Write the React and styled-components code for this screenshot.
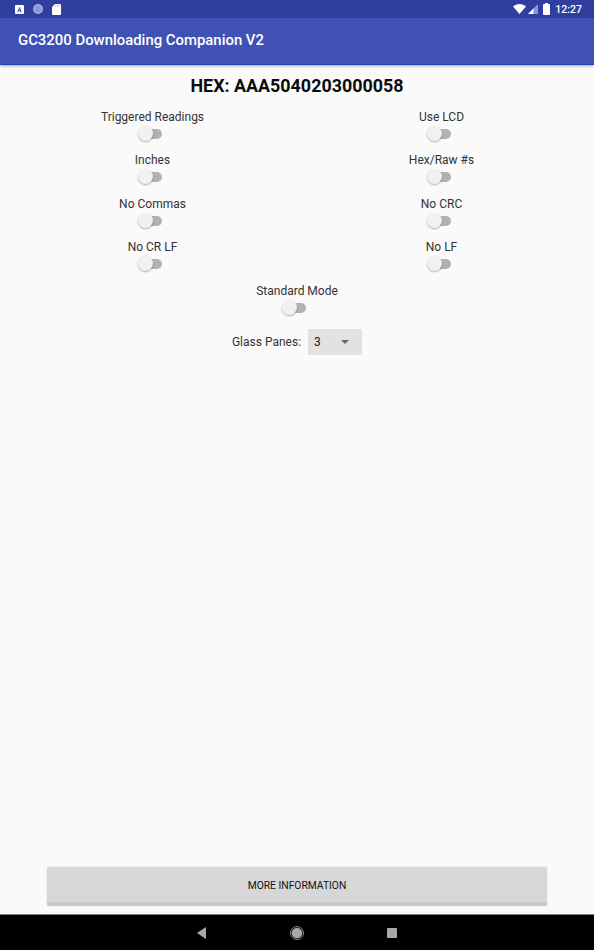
import styled, { createGlobalStyle } from 'styled-components';

const GlobalStyle = createGlobalStyle`
  html, body {
    margin: 0;
    padding: 0;
    background: #fafafa;
  }
  body {
    font-family: Roboto, "Liberation Sans", sans-serif;
  }
`;

const Screen = styled.div`
  width: 594px;
  height: 950px;
  display: flex;
  flex-direction: column;
  overflow: hidden;
  background: #fafafa;
`;

const StatusBar = styled.div`
  height: 18px;
  flex: none;
  background: #303f9f;
  display: flex;
  align-items: center;
  justify-content: space-between;
  padding: 0 12px 0 15px;
`;

const StatusGroup = styled.div`
  display: flex;
  align-items: center;
  gap: ${(p) => p.$gap}px;
`;

const Clock = styled.span`
  color: #fff;
  font-size: 10.5px;
  font-weight: 500;
  margin-left: 3px;
`;

const Toolbar = styled.header`
  height: 47px;
  flex: none;
  box-sizing: border-box;
  background: #3f51b5;
  border-bottom: 1px solid #1f3fc0;
  box-shadow: 0 1px 3px rgba(0, 0, 0, 0.35);
  display: flex;
  align-items: center;
  padding: 0 18px 2px;
  color: #fff;
  font-size: 14.9px;
  font-weight: 500;
`;

const Content = styled.main`
  flex: 1;
  display: flex;
  flex-direction: column;
  align-items: center;
`;

const Hex = styled.h1`
  margin: 11px 0 0;
  height: 20px;
  line-height: 20px;
  font-size: 17.9px;
  font-weight: 700;
  color: #0c0c0c;
  text-align: center;
`;

const OptionGrid = styled.div`
  width: 578px;
  margin-top: 13px;
  display: grid;
  grid-template-columns: 289px 289px;
  grid-auto-rows: 43.4px;
`;

const Option = styled.div`
  display: flex;
  flex-direction: column;
  align-items: center;
`;

const OptionLabel = styled.span`
  height: 16px;
  line-height: 16px;
  font-size: 12px;
  color: #333;
`;

const Switch = styled.span`
  position: relative;
  display: block;
  width: 24px;
  height: 16px;
  margin: 1px 6px 0 0;

  &::before {
    content: '';
    position: absolute;
    left: 3px;
    right: 0;
    top: 3px;
    height: 10px;
    border-radius: 5px;
    background: #b2b2b2;
  }

  &::after {
    content: '';
    position: absolute;
    left: 0;
    top: 0;
    width: 15px;
    height: 15px;
    border-radius: 50%;
    background: #f1f1f1;
    box-shadow: 0 1px 2px rgba(0, 0, 0, 0.3);
  }
`;

const SpinnerRow = styled.div`
  margin: 13px 0 0 0;
  display: flex;
  align-items: center;
  gap: 7px;
`;

const SpinnerLabel = styled.span`
  font-size: 12px;
  color: #333;
`;

const Spinner = styled.div`
  width: 54px;
  height: 26px;
  box-sizing: border-box;
  padding: 0 13px 0 6px;
  background: #e2e2e2;
  display: flex;
  align-items: center;
  justify-content: space-between;
  font-size: 12px;
  color: #222;
`;

const Caret = styled.span`
  width: 0;
  height: 0;
  border-left: 4px solid transparent;
  border-right: 4px solid transparent;
  border-top: 4px solid #666;
`;

const Footer = styled.div`
  flex: none;
  padding: 0 47px 8px;
`;

const InfoButton = styled.button`
  display: block;
  width: 500px;
  height: 39px;
  padding: 0 0 3px;
  border: 0;
  border-radius: 2px;
  background: #d6d7d7;
  box-shadow: inset 0 -4px 0 #c9c9c9, 0 0 2px rgba(0, 0, 0, 0.14);
  font-family: inherit;
  font-size: 10.3px;
  font-weight: 400;
  color: #111;
`;

const NavBar = styled.nav`
  height: 36px;
  flex: none;
  box-sizing: border-box;
  border-top: 1px solid #7a7a7a;
  background: #000;
  display: flex;
  align-items: center;
  justify-content: center;
  gap: 83px;
  padding: 1px 0 0 0;
`;

const BatterySvg = styled.svg`
  margin-left: 3px;
`;

const options = [
  'Triggered Readings',
  'Use LCD',
  'Inches',
  'Hex/Raw #s',
  'No Commas',
  'No CRC',
  'No CR LF',
  'No LF',
];

const AppIcon = () => (
  <svg width="9" height="9" viewBox="0 0 9 9">
    <rect width="9" height="9" rx="1" fill="#fff" />
    <path d="M2.2 7.2 4.5 1.8l2.3 5.4H5.7L5.3 6.1H3.7l-.4 1.100zM4 5.200h1L4.500 3.800z" fill="#303f9f" />
  </svg>
);

const DotIcon = () => (
  <svg width="10" height="10" viewBox="0 0 10 10">
    <circle cx="5" cy="5" r="5" fill="#aab0dc" />
    <circle cx="5" cy="5" r="3.600" fill="#8f97cf" />
  </svg>
);

const CardIcon = () => (
  <svg width="9" height="11" viewBox="0 0 9 11">
    <path d="M3 0h5a1 1 0 0 1 1 1v9a1 1 0 0 1-1 1H1a1 1 0 0 1-1-1V3z" fill="#fff" />
    <path d="M3.400 1h.7v1.600h-.7zM5 1h.7v1.600H5zM6.600 1h.7v1.600h-.7z" fill="#8f97cf" />
  </svg>
);

const WifiIcon = () => (
  <svg width="13" height="10" viewBox="0 0 13 10">
    <path d="M0 2.500C1.800 .9 4 0 6.500 0s4.700.9 6.500 2.500L6.500 10z" fill="#fff" />
  </svg>
);

const SignalIcon = () => (
  <svg width="10" height="10" viewBox="0 0 10 10">
    <path d="M10 0v10H0z" fill="#8f97cf" />
    <path d="M5.500 4.500V10H0z" fill="#fff" />
  </svg>
);

const BatteryIcon = () => (
  <BatterySvg width="7" height="12" viewBox="0 0 7 12">
    <path d="M2 0h3v1h1.200a.8.8 0 0 1 .8.800V11.200a.8.8 0 0 1-.8.800H.8a.8.8 0 0 1-.8-.8V1.800A.8.8 0 0 1 .8 1H2z" fill="#fff" />
  </BatterySvg>
);

const BackIcon = () => (
  <svg width="10" height="12" viewBox="0 0 10 12">
    <path d="M9 0v12L0 6z" fill="#a8a8a8" />
  </svg>
);

const HomeIcon = () => (
  <svg width="14" height="14" viewBox="0 0 14 14">
    <circle cx="7" cy="7" r="6.500" fill="none" stroke="#a8a8a8" strokeWidth="0.8" />
    <circle cx="7" cy="7" r="5.300" fill="#a8a8a8" />
  </svg>
);

const RecentIcon = () => (
  <svg width="10" height="10" viewBox="0 0 10 10">
    <rect width="10" height="10" rx="1" fill="#a8a8a8" />
  </svg>
);

const App = () => {
  return (
    <Screen>
      <GlobalStyle />
      <StatusBar>
        <StatusGroup $gap={9}>
          <AppIcon />
          <DotIcon />
          <CardIcon />
        </StatusGroup>
        <StatusGroup $gap={2}>
          <WifiIcon />
          <SignalIcon />
          <BatteryIcon />
          <Clock>12:27</Clock>
        </StatusGroup>
      </StatusBar>
      <Toolbar>GC3200 Downloading Companion V2</Toolbar>
      <Content>
        <Hex>HEX: AAA5040203000058</Hex>
        <OptionGrid>
          {options.map((name) => (
            <Option key={name}>
              <OptionLabel>{name}</OptionLabel>
              <Switch />
            </Option>
          ))}
        </OptionGrid>
        <Option>
          <OptionLabel>Standard Mode</OptionLabel>
          <Switch />
        </Option>
        <SpinnerRow>
          <SpinnerLabel>Glass Panes:</SpinnerLabel>
          <Spinner>
            3
            <Caret />
          </Spinner>
        </SpinnerRow>
      </Content>
      <Footer>
        <InfoButton>MORE INFORMATION</InfoButton>
      </Footer>
      <NavBar>
        <BackIcon />
        <HomeIcon />
        <RecentIcon />
      </NavBar>
    </Screen>
  );
};

export default App;
